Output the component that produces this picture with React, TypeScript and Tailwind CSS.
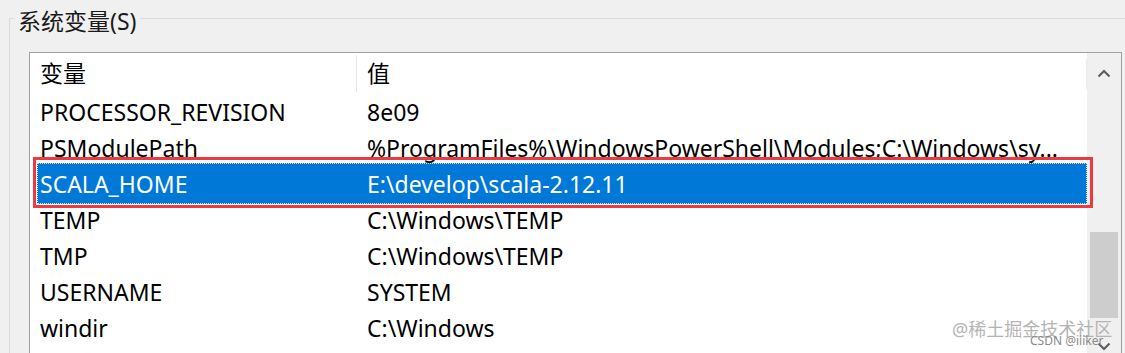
const rows = [
  { name: 'PROCESSOR_REVISION', value: '8e09' },
  { name: 'PSModulePath', value: '%ProgramFiles%\\WindowsPowerShell\\Modules;C:\\Windows\\sy...' },
  { name: 'SCALA_HOME', value: 'E:\\develop\\scala-2.12.11', selected: true },
  { name: 'TEMP', value: 'C:\\Windows\\TEMP' },
  { name: 'TMP', value: 'C:\\Windows\\TEMP' },
  { name: 'USERNAME', value: 'SYSTEM' },
  { name: 'windir', value: 'C:\\Windows' },
];

const Chevron = ({ down = false }: { down?: boolean }) => (
  <svg width="14" height="9" viewBox="0 0 14 9" className={down ? 'rotate-180' : ''}>
    <polyline points="1.5,7.5 7,2 12.5,7.5" fill="none" stroke="#5f5f5f" strokeWidth="2.2" />
  </svg>
);

export default function App() {
  return (
    <div className="relative h-[353px] w-[1125px] overflow-hidden bg-[#f0f0f0] font-['Noto_Sans','Noto_Sans_CJK_SC',sans-serif] text-[23px] text-black">
      {/* group box */}
      <div className="ml-[9px] mt-[18px] border-l border-t border-[#dcdcdc] pl-[19px]">
        <div className="-ml-[15px] -mt-[11px] w-fit bg-[#f0f0f0] px-[4px] leading-[26px] text-[#1a1a1a]">
          系统变量(S)
        </div>

        {/* list view */}
        <div className="mt-[18px] flex h-[320px] w-[1093px] border border-[#a0a0a0] bg-white">
          <div className="flex-1">
            <div className="flex h-[41px] items-center">
              <div className="w-[326px] pl-[10px]">变量</div>
              <div className="h-[37px] w-px bg-[#e5e5e5]" />
              <div className="flex-1 pl-[10px]">值</div>
              <div className="h-[30px] w-px bg-[#ececec]" />
            </div>
            {rows.map((row) => (
              <div key={row.name} className={`relative flex h-[36px] items-center ${row.selected ? 'text-white' : ''}`}>
                {row.selected && (
                  <>
                    <div className="absolute -bottom-[2px] -top-[3px] left-[7px] right-0 border border-dotted border-[#cfe3f7] bg-[#0078d7]" />
                    <div className="absolute -bottom-[6px] -top-[9px] left-[3px] -right-[6px] z-10 border-[3px] border-[#ee3a3f]" />
                  </>
                )}
                <div className="relative w-[327px] whitespace-nowrap pl-[10px]">{row.name}</div>
                <div className="relative flex-1 overflow-hidden whitespace-nowrap pl-[10px]">{row.value}</div>
              </div>
            ))}
          </div>

          {/* scrollbar */}
          <div className="flex w-[34px] flex-col bg-[#f0f0f0]">
            <div className="flex h-[40px] items-center justify-center">
              <Chevron />
            </div>
            <div className="mx-[3px] mt-[139px] h-[86px] bg-[#cdcdcd]" />
            <div className="mt-[8px] flex h-[40px] items-center justify-center">
              <Chevron down />
            </div>
          </div>
        </div>
      </div>

      {/* watermark */}
      <div className="absolute left-[952px] top-[317px] whitespace-nowrap text-[18px] leading-[24px] text-[#b4b4b4]">
        @稀土掘金技术社区
      </div>
      <div className="absolute left-[1030px] top-[334px] whitespace-nowrap text-[12px] leading-[14px] text-[#8a8a8a]">
        CSDN @iiiker
      </div>
    </div>
  );
}
